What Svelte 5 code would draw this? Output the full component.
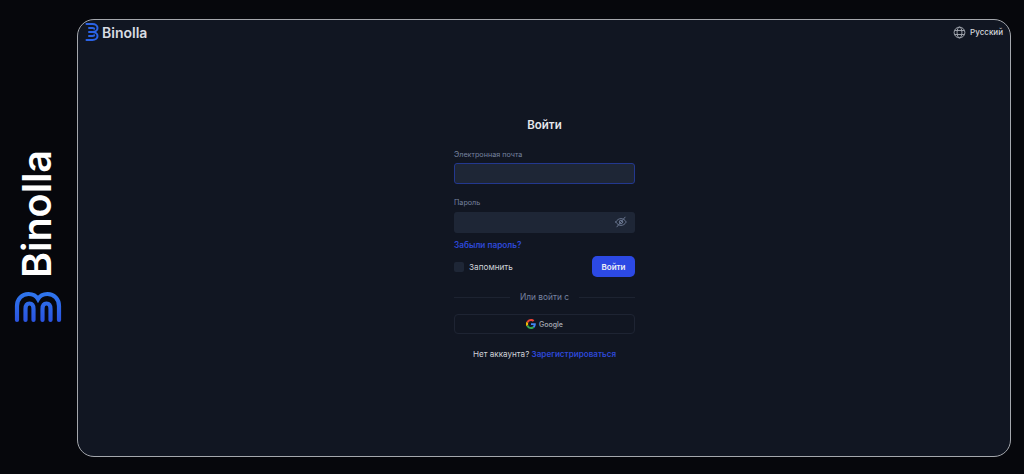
<script>
  let email = $state("");
  let password = $state("");
  let remember = $state(false);
</script>

<div class="page">
  <aside class="side">
    <div class="side-brand">
      <svg class="side-logo" viewBox="0 0 48 32" width="48" height="32" fill="none" stroke="url(#sideGrad)" stroke-width="4.2" stroke-linecap="round">
        <defs>
          <linearGradient id="sideGrad" gradientUnits="userSpaceOnUse" x1="0" y1="0" x2="0" y2="32">
            <stop offset="0" stop-color="#2f78ee" />
            <stop offset="1" stop-color="#2a52e0" />
          </linearGradient>
        </defs>
        <path d="M3 29V15C3 8 8 3 14.500 3C18.500 3 22 4.500 24 8C26 4.500 29.500 3 33.500 3C40 3 45 8 45 15V29" />
        <path d="M11.500 29V18C11.500 14.500 13 12.500 15.500 12.500C18 12.500 19.500 14.500 19.500 18V29" />
        <path d="M28.500 29V18C28.500 14.500 30 12.500 32.500 12.500C35 12.500 36.500 14.500 36.500 18V29" />
      </svg>
      <span class="side-name">Binolla</span>
    </div>
  </aside>

  <main class="frame">
    <header class="top">
      <div class="brand">
        <svg viewBox="0 0 14 20" width="14" height="20" fill="none" stroke="#2b63e6" stroke-width="2" stroke-linecap="round">
          <path d="M1.500 2H7.500C10.500 2 12.500 3.800 12.500 6C12.500 8.200 10.500 10 7.500 10C10.500 10 12.500 11.800 12.500 14C12.500 16.200 10.500 18 7.500 18H1.500" />
          <path d="M4 6H7.500C8.600 6 9.200 6.400 9.200 6.800" />
          <path d="M4 14H7.500C8.600 14 9.200 13.600 9.200 13.200" />
          <path d="M4 10H7.500" />
        </svg>
        <span>Binolla</span>
      </div>
      <div class="lang">
        <svg viewBox="0 0 14 14" width="13" height="13" fill="none" stroke="#a9adb6" stroke-width="1">
          <circle cx="7" cy="7" r="5.800" />
          <ellipse cx="7" cy="7" rx="2.600" ry="5.800" />
          <path d="M1.700 4.800H12.300M1.700 9.200H12.300" />
        </svg>
        <span>Русский</span>
      </div>
    </header>

    <section class="center">
      <form class="login" onsubmit={(e) => e.preventDefault()}>
        <h1>Войти</h1>

        <label class="field first">
          <span>Электронная почта</span>
          <input class="focused" type="email" bind:value={email} />
        </label>

        <label class="field second">
          <span>Пароль</span>
          <div class="pass">
            <input type="password" bind:value={password} />
            <svg viewBox="0 0 16 16" width="12" height="12" fill="none" stroke="#69758f" stroke-width="1.300" stroke-linecap="round">
              <path d="M1 8C3 4.800 5.300 3.500 8 3.500C10.700 3.500 13 4.800 15 8C13 11.200 10.700 12.500 8 12.500C5.300 12.500 3 11.200 1 8Z" />
              <circle cx="8" cy="8" r="2.300" />
              <path d="M13.500 1.500L2.500 14.500" />
            </svg>
          </div>
        </label>

        <a class="forgot" href="#forgot">Забыли пароль?</a>

        <div class="row">
          <label class="remember">
            <input type="checkbox" bind:checked={remember} />
            <span>Запомнить</span>
          </label>
          <button class="submit" type="submit">Войти</button>
        </div>

        <div class="divider"><span>Или войти с</span></div>

        <button class="google" type="button">
          <svg viewBox="0 0 48 48" width="10" height="10">
            <path fill="#ea4335" d="M24 9.500c3.500 0 6.700 1.200 9.200 3.600l6.900-6.900C35.900 2.400 30.500 0 24 0 14.600 0 6.500 5.400 2.600 13.200l8 6.200C12.500 13.700 17.800 9.500 24 9.500z" />
            <path fill="#4285f4" d="M47 24.500c0-1.600-.1-3.100-.4-4.500H24v9h12.900c-.6 3-2.200 5.500-4.700 7.200l7.700 6C44.400 38 47 31.800 47 24.500z" />
            <path fill="#fbbc05" d="M10.600 28.600c-.5-1.400-.8-3-.8-4.600s.3-3.200.8-4.600l-8-6.200C.9 16.500 0 20.100 0 24s.9 7.500 2.600 10.800l8-6.200z" />
            <path fill="#34a853" d="M24 48c6.500 0 11.900-2.100 15.900-5.800l-7.700-6c-2.100 1.400-4.900 2.300-8.200 2.300-6.200 0-11.500-4.200-13.400-9.900l-8 6.200C6.500 42.600 14.600 48 24 48z" />
          </svg>
          <span>Google</span>
        </button>

        <p class="signup">Нет аккаунта? <a href="#signup">Зарегистрироваться</a></p>
      </form>
    </section>
  </main>
</div>

<style>
  :global(body) {
    margin: 0;
    background: #06070c;
  }

  .page {
    display: flex;
    height: 474px;
    overflow: hidden;
    background: #06070c;
    font-family: Inter, "Noto Sans", sans-serif;
  }

  .side {
    flex: 0 0 77px;
    display: flex;
    justify-content: center;
    align-items: flex-end;
    padding-bottom: 151px;
    box-sizing: border-box;
  }

  .side-brand {
    display: flex;
    flex-direction: column-reverse;
    align-items: center;
    gap: 13px;
  }

  .side-logo {
    display: block;
    margin-right: 2px;
  }

  .side-name {
    writing-mode: vertical-rl;
    transform: rotate(180deg);
    margin-right: 4px;
    color: #fff;
    font-size: 39.500px;
    font-weight: 600;
    line-height: 40px;
  }

  .frame {
    flex: 0 0 934px;
    box-sizing: border-box;
    height: 438px;
    margin-top: 19px;
    border: 1px solid #a4a7ad;
    border-radius: 17px;
    background: #111622;
    display: flex;
    flex-direction: column;
  }

  .top {
    display: flex;
    justify-content: space-between;
    align-items: center;
    height: 24px;
    padding: 0 7px;
  }

  .brand {
    display: flex;
    align-items: center;
    gap: 3px;
    color: #d9dce2;
    font-size: 14px;
    font-weight: 600;
  }

  .lang {
    display: flex;
    align-items: center;
    gap: 4px;
    color: #d4d6db;
    font-size: 8px;
    font-weight: 500;
  }

  .center {
    display: flex;
    justify-content: center;
    padding-top: 73px;
    padding-left: 1px;
  }

  .login {
    width: 181px;
    display: flex;
    flex-direction: column;
  }

  h1 {
    margin: 0;
    text-align: center;
    color: #e6e8ec;
    font-size: 11.500px;
    line-height: 16px;
    font-weight: 600;
  }

  .field {
    display: flex;
    flex-direction: column;
    color: #7783a0;
    font-size: 7.200px;
    line-height: 10px;
  }

  .first {
    margin-top: 17px;
    gap: 3px;
  }

  .second {
    margin-top: 14px;
    gap: 4px;
  }

  input {
    font-family: inherit;
    outline: none;
  }

  .field input {
    box-sizing: border-box;
    width: 100%;
    height: 21px;
    border: 1px solid transparent;
    border-radius: 3px;
    background: #1e2636;
    color: #e6e8ec;
    padding: 0 24px 0 6px;
  }

  .field input.focused {
    border-color: #23388f;
  }

  .pass {
    position: relative;
  }

  .pass svg {
    position: absolute;
    right: 8px;
    top: 4px;
  }

  .forgot {
    margin-top: 6px;
    color: #2d48d6;
    font-size: 8.250px;
    line-height: 12px;
    font-weight: 600;
    text-decoration: none;
  }

  .row {
    display: flex;
    justify-content: space-between;
    align-items: center;
    margin-top: 5px;
  }

  .remember {
    display: flex;
    align-items: center;
    gap: 5px;
    color: #d0d3d9;
    font-size: 8.200px;
  }

  .remember input {
    appearance: none;
    box-sizing: border-box;
    width: 10px;
    height: 10px;
    margin: 0;
    border-radius: 2px;
    background: #1e2636;
  }

  .submit {
    width: 43px;
    height: 21px;
    border: 0;
    border-radius: 5px;
    background: #2c49e4;
    color: #eef0f6;
    font-family: inherit;
    font-size: 8px;
    font-weight: 600;
    padding: 0;
  }

  .divider {
    display: flex;
    align-items: center;
    gap: 10px;
    margin-top: 13px;
    color: #7783a0;
    font-size: 8.300px;
    line-height: 14px;
  }

  .divider::before,
  .divider::after {
    content: "";
    flex: 1;
    height: 1px;
    background: #1d2331;
  }

  .google {
    display: flex;
    justify-content: center;
    align-items: center;
    gap: 3px;
    height: 20px;
    margin-top: 10px;
    border: 1px solid #1e2433;
    border-radius: 4px;
    background: transparent;
    color: #a9adb6;
    font-family: inherit;
    font-size: 7px;
    font-weight: 500;
    padding: 0;
  }

  .signup {
    margin: 14px 0 0;
    text-align: center;
    color: #d0d3d9;
    font-size: 8.100px;
    line-height: 12px;
  }

  .signup a {
    color: #2d48d6;
    font-weight: 600;
    text-decoration: none;
  }
</style>
